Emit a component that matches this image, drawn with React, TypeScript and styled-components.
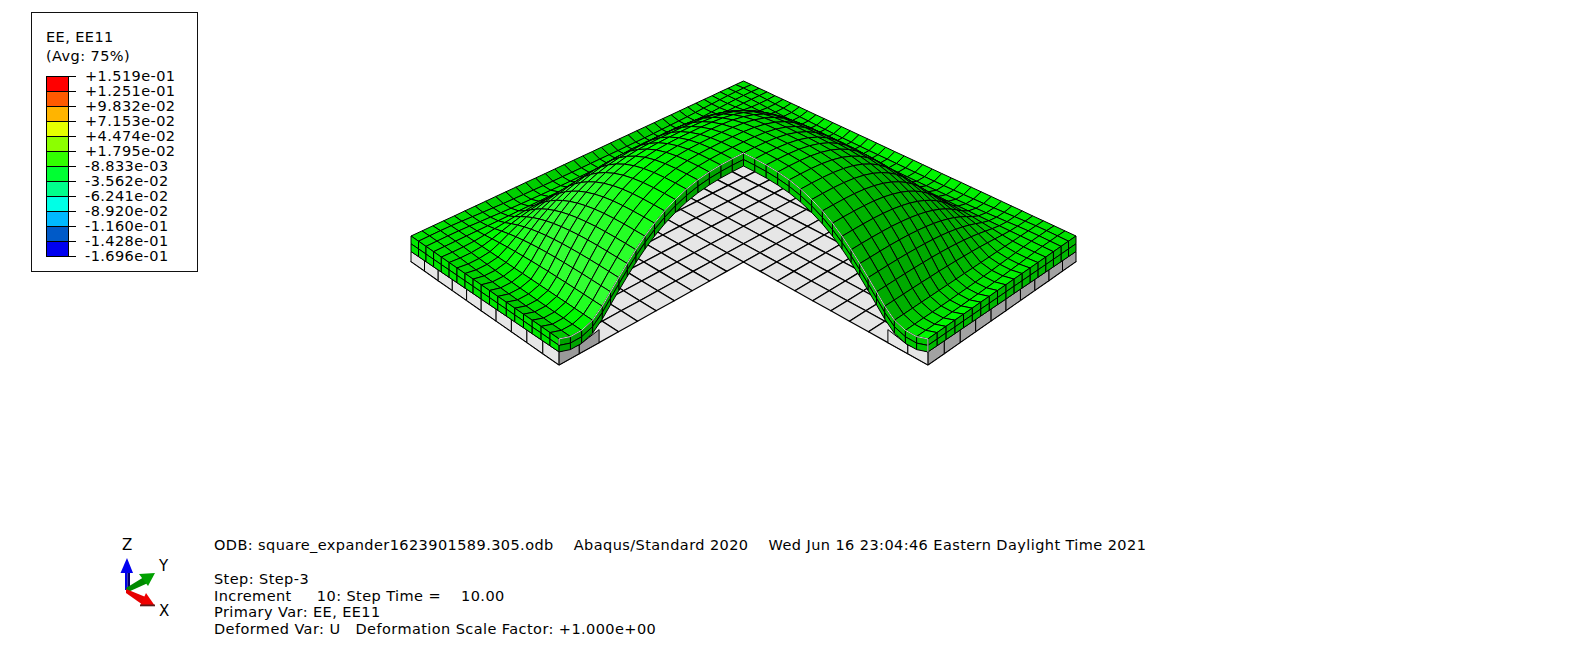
import styled, { createGlobalStyle } from 'styled-components';

const GlobalStyle = createGlobalStyle`
  html, body {
    margin: 0;
    background: #fff;
  }
`;

const LEGEND_VALUES = [
  '+1.519e-01', '+1.251e-01', '+9.832e-02', '+7.153e-02', '+4.474e-02', '+1.795e-02', '-8.833e-03',
  '-3.562e-02', '-6.241e-02', '-8.920e-02', '-1.160e-01', '-1.428e-01', '-1.696e-01',
];

const LEGEND_COLORS = [
  '#ff0000', '#ff5a00', '#ffb400', '#e6ff00', '#8cff00', '#32ff00',
  '#00ff32', '#00ff8c', '#00ffe6', '#00b9ff', '#005ac8', '#0000f0',
];

// mesh model: plan coordinates p,q in 0..1, back corner at 0,0, the quarter p>.5,q>.5 is cut away
const CELLS = 36;
const PLATE_CELLS = 20;
const DOME_RADIUS = 5 / 12;
const DOME_HEIGHT = 83;

const persp = (p: number, q: number) => 1 - 0.1645 * (p + q);

const profile = (s: number) => {
  if (s >= 1.2) return 0;
  if (s >= 1) return -0.05 * Math.sin((Math.PI * (s - 1)) / 0.2);
  return Math.pow(1 - s * s * s, 1.3);
};

const dome = (p: number, q: number) =>
  (DOME_HEIGHT * profile(Math.abs(p - 0.5) / DOME_RADIUS) * profile(Math.abs(q - 0.5) / DOME_RADIUS) * 0.8355) /
  persp(p, q);

// nodes spread evenly along the arch rather than in plan, the skin stretches as it inflates
const ARC_STEPS = 300;
const arcTable = (() => {
  const table = [0];
  for (let i = 1; i <= ARC_STEPS; i++) {
    const [a, b] = [(i - 1) / ARC_STEPS, i / ARC_STEPS];
    const run = (b - a) * DOME_RADIUS * 350;
    const rise = DOME_HEIGHT * (profile(a) - profile(b));
    table.push(table[i - 1] + Math.hypot(run, rise));
  }
  return table;
})();

const stretch = (s: number) => {
  const target = s * arcTable[ARC_STEPS];
  let i = 1;
  while (i < ARC_STEPS && arcTable[i] < target) i++;
  const part = (target - arcTable[i - 1]) / (arcTable[i] - arcTable[i - 1]);
  return (i - 1 + part) / ARC_STEPS;
};

const warp = (u: number) => {
  const s = Math.abs(u - 0.5) / DOME_RADIUS;
  if (s >= 1) return u;
  return 0.5 + Math.sign(u - 0.5) * DOME_RADIUS * stretch(s);
};

const weight = (u: number) => Math.max(0, profile(Math.abs(u - 0.5) / DOME_RADIUS));

const node = (i: number, j: number): [number, number] => {
  const [u, v] = [i / CELLS, j / CELLS];
  return [u + (warp(u) - u) * weight(v), v + (warp(v) - v) * weight(u)];
};

const skinDepth = (p: number, q: number) => 13 + Math.max(Math.abs(p - q) - 0.5, 0) * 5;
const plateDepth = (p: number, q: number) => 13 - Math.max(Math.abs(p - q) - 0.5, 0) * 6;

const point = (p: number, q: number, drop: number) => {
  const w = persp(p, q);
  const x = 743.5 + (277.8 * (q - p)) / w;
  const y = (116.2 * (p + q) + 81) / w + drop;
  return `${x.toFixed(1)},${y.toFixed(1)}`;
};

const topPoint = (p: number, q: number, depth = 0) => point(p, q, depth - dome(p, q));

type Plan = [number, number];

const topColor = (a: Plan, b: Plan, c: Plan, d: Plan) => {
  const [za, zb, zc, zd] = [dome(...a), dome(...b), dome(...c), dome(...d)];
  const sizeP = ((b[0] + c[0] - a[0] - d[0]) / 2) * 400;
  const sizeQ = ((c[1] + d[1] - a[1] - b[1]) / 2) * 400;
  const sx = (za + zd - zb - zc) / 2 / sizeP;
  const sy = (za + zb - zc - zd) / 2 / sizeQ;
  const len = Math.sqrt(1 + sx * sx + sy * sy);
  const v = (sx - sy) / len;
  const g = v > 0 ? 226 + 60 * v + 80 * v * v * v : 226 + 75 * v;
  const rest = Math.min(80, Math.max(0, Math.round(g - 255)));
  return `rgb(${rest},${Math.min(255, Math.round(g))},${rest})`;
};

type Face = { points: string; fill: string };

const buildPlate = () => {
  const faces: Face[] = [];
  const n = PLATE_CELLS;
  const total = (p: number, q: number) => skinDepth(p, q) + plateDepth(p, q);
  for (let i = 0; i < n; i++) {
    for (let j = 0; j < n; j++) {
      if (i >= n / 2 && j >= n / 2) continue;
      const [p0, p1, q0, q1] = [i / n, (i + 1) / n, j / n, (j + 1) / n];
      faces.push({
        fill: '#e6e6e6',
        points: [
          point(p0, q0, total(p0, q0)),
          point(p1, q0, total(p1, q0)),
          point(p1, q1, total(p1, q1)),
          point(p0, q1, total(p0, q1)),
        ].join(' '),
      });
    }
  }
  return faces;
};

// the plate's upper edge follows the dip of the skin beside the dome foot
const wall = (pa: number, qa: number, pb: number, qb: number, fill: string): Face => {
  const from = (p: number, q: number) => skinDepth(p, q) - Math.min(dome(p, q), 0);
  const to = (p: number, q: number) => skinDepth(p, q) + plateDepth(p, q);
  return {
    fill,
    points: [
      point(pa, qa, from(pa, qa)),
      point(pb, qb, from(pb, qb)),
      point(pb, qb, to(pb, qb)),
      point(pa, qa, to(pa, qa)),
    ].join(' '),
  };
};

const buildPlateWalls = () => {
  const faces: Face[] = [];
  const step = 1 / PLATE_CELLS;
  for (let i = 0; i < PLATE_CELLS / 2; i++) {
    faces.push(wall(1, i * step, 1, (i + 1) * step, '#e6e6e6'));
    faces.push(wall(i * step, 1, (i + 1) * step, 1, '#a2a2a2'));
  }
  for (let i = 0; i < 2; i++) {
    faces.push(wall(1 - i * step, 0.5, 1 - (i + 1) * step, 0.5, '#9a9a9a'));
    faces.push(wall(0.5, 1 - i * step, 0.5, 1 - (i + 1) * step, '#e6e6e6'));
  }
  return faces;
};

const buildSkinTop = () => {
  const cells: { order: number; face: Face }[] = [];
  const half = CELLS / 2;
  for (let i = 0; i < CELLS; i++) {
    for (let j = 0; j < CELLS; j++) {
      if (i >= half && j >= half) continue;
      const a = node(i, j);
      const b = node(i + 1, j);
      const c = node(i + 1, j + 1);
      const d = node(i, j + 1);
      cells.push({
        order: i + j,
        face: {
          fill: topColor(a, b, c, d),
          points: [topPoint(...a), topPoint(...b), topPoint(...c), topPoint(...d)].join(' '),
        },
      });
    }
  }
  return cells.sort((x, y) => x.order - y.order).map((cell) => cell.face);
};

const band = (a: Plan, b: Plan, fill: string) => {
  const depthA = skinDepth(...a);
  const depthB = skinDepth(...b);
  return [0, 0.5].map((layer) => ({
    fill,
    points: [
      topPoint(a[0], a[1], depthA * layer),
      topPoint(b[0], b[1], depthB * layer),
      topPoint(b[0], b[1], depthB * (layer + 0.5)),
      topPoint(a[0], a[1], depthA * (layer + 0.5)),
    ].join(' '),
  }));
};

const buildSkinWalls = () => {
  const faces: Face[] = [];
  const half = CELLS / 2;
  for (let i = 0; i < half; i++) {
    faces.push(...band(node(CELLS, i), node(CELLS, i + 1), '#00e600'));
    faces.push(...band(node(i, CELLS), node(i + 1, CELLS), '#00b800'));
    faces.push(...band(node(half + i, half), node(half + i + 1, half), '#00a400'));
    faces.push(...band(node(half, half + i), node(half, half + i + 1), '#00c800'));
  }
  return faces;
};

const archLine = (side: 'p' | 'q') => {
  const half = CELLS / 2;
  const pts: string[] = [];
  for (let i = half; i <= CELLS; i++) {
    const [p, q] = side === 'p' ? node(i, half) : node(half, i);
    pts.push(topPoint(p, q));
  }
  return pts.join(' ');
};

const plateFaces = buildPlate();
const plateWalls = buildPlateWalls();
const skinTop = buildSkinTop();
const skinWalls = buildSkinWalls();

const Page = styled.div`
  display: flex;
  flex-direction: column;
  width: 1589px;
  height: 647px;
  overflow: hidden;
  background: #fff;
  color: #000;
  font-family: 'DejaVu Sans', Verdana, sans-serif;
  font-size: 14.5px;
  letter-spacing: 0.42px;
`;

const Viewport = styled.div`
  display: flex;
  align-items: flex-start;
  padding: 12px 0 0 31px;
`;

const Legend = styled.div`
  box-sizing: border-box;
  flex: none;
  width: 167px;
  height: 260px;
  padding: 15px 0 0 14px;
  border: 1px solid #111;
`;

const LegendTitle = styled.div`
  line-height: 19px;
  height: 19px;
`;

const Scale = styled.div`
  display: flex;
  margin-top: 3px;
`;

const Bar = styled.div`
  display: flex;
  flex-direction: column;
  flex: none;
  width: 23px;
  margin-top: 7px;
`;

const Swatch = styled.div<{ $color: string }>`
  box-sizing: border-box;
  height: 15px;
  background: ${({ $color }) => $color};
  border: 1px solid #000;
  border-bottom-width: 0;

  &:last-child {
    height: 16px;
    border-bottom-width: 1px;
  }
`;

const Labels = styled.div`
  display: flex;
  flex-direction: column;
`;

const LabelRow = styled.div`
  display: flex;
  align-items: center;
  height: 15px;
  line-height: 15px;
  white-space: pre;

  &::before {
    content: '';
    flex: none;
    width: 7px;
    height: 1px;
    margin-right: 9px;
    background: #000;
  }
`;

const ModelSvg = styled.svg`
  flex: none;
  width: 700px;
  height: 320px;
  margin: 58px 0 0 202px;

  polygon {
    stroke: #000;
    stroke-width: 1;
    stroke-linejoin: round;
  }

  .grid polygon {
    stroke-width: 1.3;
  }

  .feature {
    fill: none;
    stroke: #fff;
    stroke-width: 0.8;
  }
`;

const Footer = styled.div`
  display: flex;
  align-items: flex-start;
  margin-top: auto;
  padding: 0 0 10px 118px;
`;

const TriadSvg = styled.svg`
  flex: none;
  width: 60px;
  height: 90px;
  margin: -6px 36px 0 0;

  text {
    font-family: 'DejaVu Sans', Verdana, sans-serif;
    font-size: 15px;
    fill: #000;
  }
`;

const Info = styled.div`
  line-height: 16.4px;
  white-space: pre;
`;

const InfoLine = styled.div<{ $gap?: boolean }>`
  margin-top: ${({ $gap }) => ($gap ? '18px' : '0')};
`;

const FaceGroup = ({ faces, className }: { faces: Face[]; className?: string }) => (
  <g className={className}>
    {faces.map((face, index) => (
      <polygon key={index} points={face.points} fill={face.fill} />
    ))}
  </g>
);

const Triad = () => (
  <TriadSvg viewBox="118 530 60 90">
    <text x="122" y="549">Z</text>
    <text x="159" y="570">Y</text>
    <text x="159" y="615">X</text>
    <rect x="125" y="570" width="2.5" height="19" fill="#0000e6" />
    <rect x="127.5" y="570" width="2.5" height="19" fill="#000070" />
    <polygon points="127,557 133,572 120.5,572" fill="#0000f0" />
    <polygon points="126,587 144,576 148,582 128,591" fill="#008a00" />
    <polygon points="155,572 139,573 148,585" fill="#00a000" />
    <polygon points="126,588 148,597 143,604 126,592" fill="#e60000" />
    <polygon points="146,592 155,605 140,605" fill="#f00000" />
    <rect x="140" y="603.5" width="15" height="1.8" fill="#5a1a1a" />
  </TriadSvg>
);

export default function App() {
  return (
    <Page>
      <GlobalStyle />
      <Viewport>
        <Legend>
          <LegendTitle>EE, EE11</LegendTitle>
          <LegendTitle>(Avg: 75%)</LegendTitle>
          <Scale>
            <Bar>
              {LEGEND_COLORS.map((color) => (
                <Swatch key={color} $color={color} />
              ))}
            </Bar>
            <Labels>
              {LEGEND_VALUES.map((value) => (
                <LabelRow key={value}>{value}</LabelRow>
              ))}
            </Labels>
          </Scale>
        </Legend>
        <ModelSvg viewBox="400 70 700 320">
          <FaceGroup className="grid" faces={plateFaces} />
          <FaceGroup faces={plateWalls} />
          <FaceGroup faces={skinTop} />
          <FaceGroup faces={skinWalls} />
          <polyline className="feature" points={archLine('p')} />
          <polyline className="feature" points={archLine('q')} />
          <polyline className="feature" points={`${point(1, 0.5, 0)} ${point(1, 0.5, 6)}`} />
          <polyline className="feature" points={`${point(0.5, 1, 0)} ${point(0.5, 1, 13)}`} />
        </ModelSvg>
      </Viewport>
      <Footer>
        <Triad />
        <Info>
          <InfoLine>ODB: square_expander1623901589.305.odb    Abaqus/Standard 2020    Wed Jun 16 23:04:46 Eastern Daylight Time 2021</InfoLine>
          <InfoLine $gap>Step: Step-3</InfoLine>
          <InfoLine>Increment     10: Step Time =    10.00</InfoLine>
          <InfoLine>Primary Var: EE, EE11</InfoLine>
          <InfoLine>Deformed Var: U   Deformation Scale Factor: +1.000e+00</InfoLine>
        </Info>
      </Footer>
    </Page>
  );
}
